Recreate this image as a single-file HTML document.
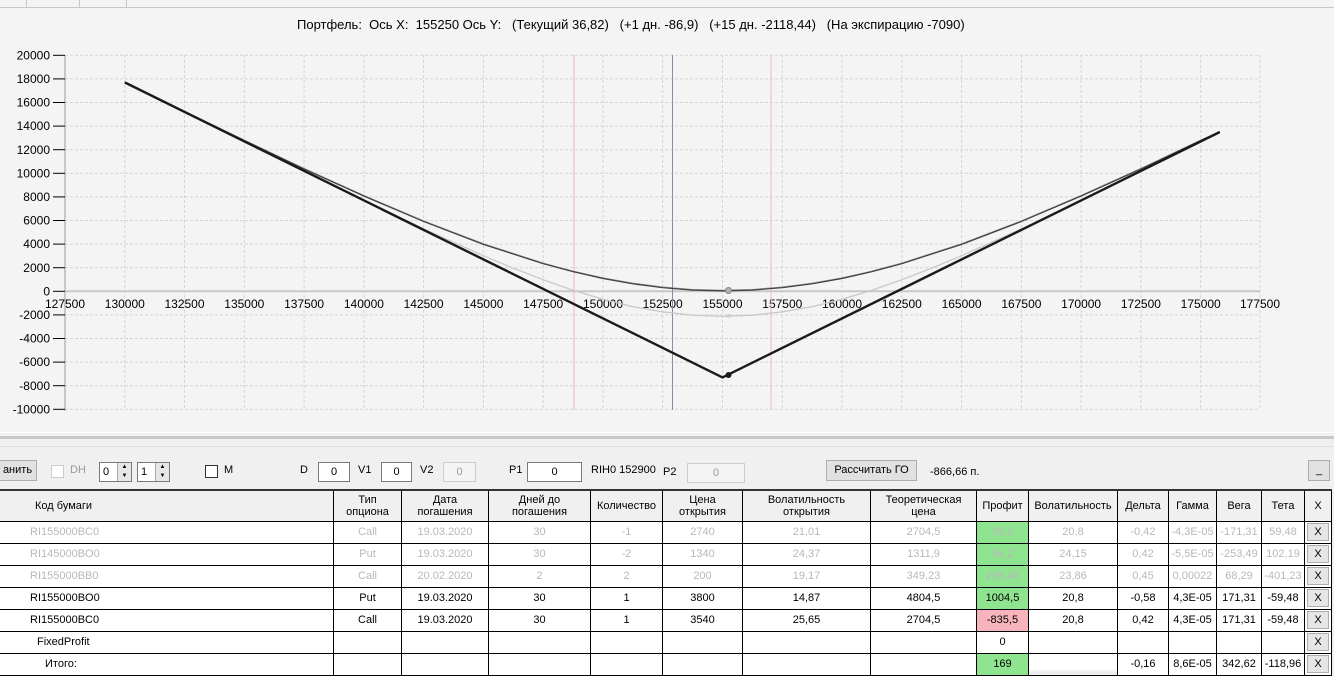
<!DOCTYPE html>
<html><head><meta charset="utf-8">
<style>
*{margin:0;padding:0;box-sizing:border-box}
body{width:1334px;height:675px;overflow:hidden;background:#f0f0f0;font-family:"Liberation Sans",sans-serif;font-size:11px;color:#000;position:relative}
.a{position:absolute}
.box{position:absolute;background:#fff;border:1px solid #7a7a7a;text-align:center;font-size:11px;line-height:18px;height:20px}
.btn{position:absolute;background:#e1e1e1;border:1px solid #adadad;text-align:center;line-height:19px;height:21px}
table{position:absolute;left:-1px;top:489px;border-collapse:collapse;table-layout:fixed;background:#fff}
td{border:1px solid #000;height:22px;text-align:center;font-size:11px;overflow:hidden;white-space:nowrap;padding:0}
tr.h td{height:31px;background:#f0f0f0;font-size:11px;line-height:12px;border-top:2px solid #333}
tr.g td{color:#b8b8b8}
td.l{text-align:left;padding-left:30px}
.gr{background:#8fe48f}
.pk{background:#f8b4bc}
.x{background:#fff;padding:1px 2px}
.x span{display:block;background:#e6e6e6;border:1px solid #adadad;height:18px;line-height:16px}
</style></head><body>
<div class="a" style="left:0;top:0;width:1334px;height:432px;background:#f4f4f4"></div>
<div class="a" style="left:0;top:7px;width:1334px;height:1px;background:#c8c8c8"></div>
<div class="a" style="left:26px;top:0;width:1px;height:7px;background:#c8c8c8"></div>
<div class="a" style="left:79px;top:0;width:1px;height:7px;background:#c8c8c8"></div>
<div class="a" style="left:126px;top:0;width:1px;height:7px;background:#c8c8c8"></div>
<div class="a" style="left:297px;top:17px;white-space:nowrap;font-size:13px">Портфель:&nbsp; Ось X:&nbsp; 155250 Ось Y:&nbsp;&nbsp; (Текущий 36,82)&nbsp;&nbsp; (+1 дн. -86,9)&nbsp;&nbsp; (+15 дн. -2118,44)&nbsp;&nbsp; (На экспирацию -7090)</div>
<svg class="a" style="left:0;top:0" width="1334" height="432" font-family="Liberation Sans, sans-serif" font-size="12">
<g stroke="#d4d4d4" stroke-dasharray="3,2" stroke-width="1">
<line x1="65" y1="55.3" x2="1260" y2="55.3"/><line x1="65" y1="78.9" x2="1260" y2="78.9"/><line x1="65" y1="102.5" x2="1260" y2="102.5"/><line x1="65" y1="126.1" x2="1260" y2="126.1"/><line x1="65" y1="149.7" x2="1260" y2="149.7"/><line x1="65" y1="173.3" x2="1260" y2="173.3"/><line x1="65" y1="196.9" x2="1260" y2="196.9"/><line x1="65" y1="220.5" x2="1260" y2="220.5"/><line x1="65" y1="244.1" x2="1260" y2="244.1"/><line x1="65" y1="267.7" x2="1260" y2="267.7"/><line x1="65" y1="314.9" x2="1260" y2="314.9"/><line x1="65" y1="338.5" x2="1260" y2="338.5"/><line x1="65" y1="362.1" x2="1260" y2="362.1"/><line x1="65" y1="385.7" x2="1260" y2="385.7"/><line x1="65" y1="409.3" x2="1260" y2="409.3"/>
<line x1="124.8" y1="55" x2="124.8" y2="410"/><line x1="184.5" y1="55" x2="184.5" y2="410"/><line x1="244.3" y1="55" x2="244.3" y2="410"/><line x1="304.1" y1="55" x2="304.1" y2="410"/><line x1="363.9" y1="55" x2="363.9" y2="410"/><line x1="423.6" y1="55" x2="423.6" y2="410"/><line x1="483.4" y1="55" x2="483.4" y2="410"/><line x1="543.2" y1="55" x2="543.2" y2="410"/><line x1="603" y1="55" x2="603" y2="410"/><line x1="662.7" y1="55" x2="662.7" y2="410"/><line x1="722.5" y1="55" x2="722.5" y2="410"/><line x1="782.3" y1="55" x2="782.3" y2="410"/><line x1="842" y1="55" x2="842" y2="410"/><line x1="901.8" y1="55" x2="901.8" y2="410"/><line x1="961.6" y1="55" x2="961.6" y2="410"/><line x1="1021.4" y1="55" x2="1021.4" y2="410"/><line x1="1081.1" y1="55" x2="1081.1" y2="410"/><line x1="1140.9" y1="55" x2="1140.9" y2="410"/><line x1="1200.7" y1="55" x2="1200.7" y2="410"/><line x1="1260" y1="55" x2="1260" y2="410"/>
</g>
<line x1="65" y1="55" x2="65" y2="411" stroke="#c8c8c8" stroke-width="2"/>
<line x1="65" y1="291.3" x2="1260" y2="291.3" stroke="#c8c8c8" stroke-width="2"/>
<g stroke="#000" stroke-width="1">
<line x1="53" y1="55.3" x2="65" y2="55.3"/><line x1="53" y1="78.9" x2="65" y2="78.9"/><line x1="53" y1="102.5" x2="65" y2="102.5"/><line x1="53" y1="126.1" x2="65" y2="126.1"/><line x1="53" y1="149.7" x2="65" y2="149.7"/><line x1="53" y1="173.3" x2="65" y2="173.3"/><line x1="53" y1="196.9" x2="65" y2="196.9"/><line x1="53" y1="220.5" x2="65" y2="220.5"/><line x1="53" y1="244.1" x2="65" y2="244.1"/><line x1="53" y1="267.7" x2="65" y2="267.7"/><line x1="53" y1="291.3" x2="65" y2="291.3"/><line x1="53" y1="314.9" x2="65" y2="314.9"/><line x1="53" y1="338.5" x2="65" y2="338.5"/><line x1="53" y1="362.1" x2="65" y2="362.1"/><line x1="53" y1="385.7" x2="65" y2="385.7"/><line x1="53" y1="409.3" x2="65" y2="409.3"/>
</g>
<g text-anchor="end">
<text x="50" y="59.5">20000</text><text x="50" y="83">18000</text><text x="50" y="106.5">16000</text><text x="50" y="130">14000</text><text x="50" y="154">12000</text><text x="50" y="177.5">10000</text><text x="50" y="201">8000</text><text x="50" y="224.5">6000</text><text x="50" y="248">4000</text><text x="50" y="272">2000</text><text x="50" y="295.5">0</text><text x="50" y="319">-2000</text><text x="50" y="342.5">-4000</text><text x="50" y="366">-6000</text><text x="50" y="390">-8000</text><text x="50" y="413.5">-10000</text>
</g>
<g text-anchor="middle">
<text x="65" y="308">127500</text><text x="124.8" y="308">130000</text><text x="184.5" y="308">132500</text><text x="244.3" y="308">135000</text><text x="304.1" y="308">137500</text><text x="363.9" y="308">140000</text><text x="423.6" y="308">142500</text><text x="483.4" y="308">145000</text><text x="543.2" y="308">147500</text><text x="603" y="308">150000</text><text x="662.7" y="308">152500</text><text x="722.5" y="308">155000</text><text x="782.3" y="308">157500</text><text x="842" y="308">160000</text><text x="901.8" y="308">162500</text><text x="961.6" y="308">165000</text><text x="1021.4" y="308">167500</text><text x="1081.1" y="308">170000</text><text x="1140.9" y="308">172500</text><text x="1200.7" y="308">175000</text><text x="1260" y="308">177500</text>
</g>
<line x1="574" y1="55" x2="574" y2="410" stroke="#f4b8c0" stroke-width="1"/>
<line x1="771" y1="55" x2="771" y2="410" stroke="#f4b8c0" stroke-width="1"/>
<line x1="672.5" y1="55" x2="672.5" y2="410" stroke="#8090a8" stroke-width="1"/>
<polyline fill="none" stroke="#c8c8c8" stroke-width="1.3" stroke-linejoin="round" points="124.8,82.9 184.5,112.4 244.3,141.8 304.1,171.2 363.9,200.3 423.6,228.8 483.4,255.7 513.3,268.2 543.2,279.7 573.1,290.2 603,299.2 632.8,306.6 662.7,311.9 692.6,315.2 722.5,316.4 752.4,315.2 782.3,311.9 812.2,306.6 842,299.2 871.9,290.2 901.8,279.7 931.7,268.2 961.6,255.7 1021.4,228.8 1081.1,200.3 1140.9,171.2 1200.7,141.8 1219.8,132.5"/>
<polyline fill="none" stroke="#909090" stroke-width="1.3" stroke-linejoin="round" points="124.8,82.7 184.5,111.5 244.3,140.2 304.1,168.6 363.9,195.6 423.6,221 483.4,243.9 543.2,263.2 573.1,271.2 603,278 632.8,283.3 662.7,287.2 692.6,289.6 722.5,290.4 752.4,289.6 782.3,287.2 812.2,283.3 842,278 871.9,271.2 901.8,263.2 961.6,243.9 1021.4,221 1081.1,195.6 1140.9,168.6 1200.7,140.2 1219.8,131.8"/>
<polyline fill="none" stroke="#404040" stroke-width="1.2" stroke-linejoin="round" points="124.8,82.7 184.5,111.9 244.3,140.7 304.1,169.1 363.9,196.1 423.6,221.5 483.4,244.4 543.2,263.7 573.1,271.7 603,278.5 632.8,283.8 662.7,287.7 692.6,290.1 722.5,290.9 752.4,290.1 782.3,287.7 812.2,283.8 842,278.5 871.9,271.7 901.8,263.7 961.6,244.4 1021.4,221.5 1081.1,196.1 1140.9,169.1 1200.7,140.7 1219.8,132.3"/>
<polyline fill="none" stroke="#1a1a1a" stroke-width="2.4" points="124.8,82.4 722.5,377.4 1219.8,132"/>
<circle cx="728.5" cy="375" r="3" fill="#1a1a1a"/>
<circle cx="728.5" cy="290.5" r="3" fill="#b0b0b0" stroke="#888"/>
<circle cx="728.5" cy="316" r="2" fill="#d0d0d0"/>
</svg>
<div class="a" style="left:0;top:432px;width:1334px;height:1px;background:#fff"></div>
<div class="a" style="left:0;top:436px;width:1334px;height:3px;background:#c8c8c8"></div>
<div class="a" style="left:0;top:446px;width:1334px;height:1px;background:#e0e0e0"></div>
<div class="btn" style="left:-2px;top:460px;width:39px">анить</div>
<div class="a" style="left:51px;top:465px;width:13px;height:13px;border:1px solid #ccc;background:#fff"></div>
<div class="a" style="left:70px;top:464px;color:#999">DH</div>
<div class="box" style="left:99px;top:462px;width:33px;text-align:left;padding-left:3px">0<span style="position:absolute;right:0;top:0;width:14px;height:18px;background:#e6e6e6;border-left:1px solid #aaa;font-size:6px;line-height:9px;text-align:center">▲<br>▼</span></div>
<div class="box" style="left:137px;top:462px;width:33px;text-align:left;padding-left:3px">1<span style="position:absolute;right:0;top:0;width:14px;height:18px;background:#e6e6e6;border-left:1px solid #aaa;font-size:6px;line-height:9px;text-align:center">▲<br>▼</span></div>
<div class="a" style="left:205px;top:465px;width:13px;height:13px;border:1px solid #333;background:#fff"></div>
<div class="a" style="left:224px;top:464px">M</div>
<div class="a" style="left:300px;top:464px">D</div>
<div class="box" style="left:318px;top:462px;width:32px">0</div>
<div class="a" style="left:358px;top:464px">V1</div>
<div class="box" style="left:381px;top:462px;width:31px">0</div>
<div class="a" style="left:420px;top:464px">V2</div>
<div class="box" style="left:443px;top:462px;width:33px;border-color:#ccc;color:#999;background:#f4f4f4">0</div>
<div class="a" style="left:509px;top:464px">P1</div>
<div class="box" style="left:527px;top:462px;width:55px">0</div>
<div class="a" style="left:591px;top:464px">RIH0 152900</div>
<div class="a" style="left:663px;top:466px">P2</div>
<div class="box" style="left:687px;top:463px;width:58px;border-color:#ccc;color:#999;background:#f4f4f4">0</div>
<div class="btn" style="left:826px;top:460px;width:91px">Рассчитать ГО</div>
<div class="a" style="left:930px;top:466px">-866,66 п.</div>
<div class="btn" style="left:1308px;top:460px;width:22px">_</div>
<table>
<colgroup><col style="width:334px"><col style="width:68px"><col style="width:87px"><col style="width:102px"><col style="width:72px"><col style="width:80px"><col style="width:128px"><col style="width:106px"><col style="width:52px"><col style="width:89px"><col style="width:51px"><col style="width:48px"><col style="width:45px"><col style="width:43px"><col style="width:27px"></colgroup>
<tr class="h"><td class="l" style="padding-left:35px">Код бумаги</td><td>Тип<br>опциона</td><td>Дата<br>погашения</td><td>Дней до<br>погашения</td><td>Количество</td><td>Цена<br>открытия</td><td>Волатильность<br>открытия</td><td>Теоретическая<br>цена</td><td>Профит</td><td>Волатильность</td><td>Дельта</td><td>Гамма</td><td>Вега</td><td>Тета</td><td>X</td></tr>
<tr class="g"><td class="l">RI155000BC0</td><td>Call</td><td>19.03.2020</td><td>30</td><td>-1</td><td>2740</td><td>21,01</td><td>2704,5</td><td class="gr">35,5</td><td>20,8</td><td>-0,42</td><td>-4,3E-05</td><td>-171,31</td><td>59,48</td><td class="x"><span style="color:#000">X</span></td></tr>
<tr class="g"><td class="l">RI145000BO0</td><td>Put</td><td>19.03.2020</td><td>30</td><td>-2</td><td>1340</td><td>24,37</td><td>1311,9</td><td class="gr">56,2</td><td>24,15</td><td>0,42</td><td>-5,5E-05</td><td>-253,49</td><td>102,19</td><td class="x"><span style="color:#000">X</span></td></tr>
<tr class="g"><td class="l">RI155000BB0</td><td>Call</td><td>20.02.2020</td><td>2</td><td>2</td><td>200</td><td>19,17</td><td>349,23</td><td class="gr">298,46</td><td>23,86</td><td>0,45</td><td>0,00022</td><td>68,29</td><td>-401,23</td><td class="x"><span style="color:#000">X</span></td></tr>
<tr><td class="l">RI155000BO0</td><td>Put</td><td>19.03.2020</td><td>30</td><td>1</td><td>3800</td><td>14,87</td><td>4804,5</td><td class="gr">1004,5</td><td>20,8</td><td>-0,58</td><td>4,3E-05</td><td>171,31</td><td>-59,48</td><td class="x"><span>X</span></td></tr>
<tr><td class="l">RI155000BC0</td><td>Call</td><td>19.03.2020</td><td>30</td><td>1</td><td>3540</td><td>25,65</td><td>2704,5</td><td class="pk">-835,5</td><td>20,8</td><td>0,42</td><td>4,3E-05</td><td>171,31</td><td>-59,48</td><td class="x"><span>X</span></td></tr>
<tr><td style="text-align:left;padding-left:37px">FixedProfit</td><td></td><td></td><td></td><td></td><td></td><td></td><td></td><td>0</td><td></td><td></td><td></td><td></td><td></td><td class="x"><span>X</span></td></tr>
<tr><td style="text-align:left;padding-left:45px">Итого:</td><td></td><td></td><td></td><td></td><td></td><td></td><td></td><td class="gr">169</td><td style="background:linear-gradient(#fff,#fff 70%,#e4e4e4)"></td><td>-0,16</td><td>8,6E-05</td><td>342,62</td><td>-118,96</td><td class="x"><span>X</span></td></tr>
</table>
</body></html>
